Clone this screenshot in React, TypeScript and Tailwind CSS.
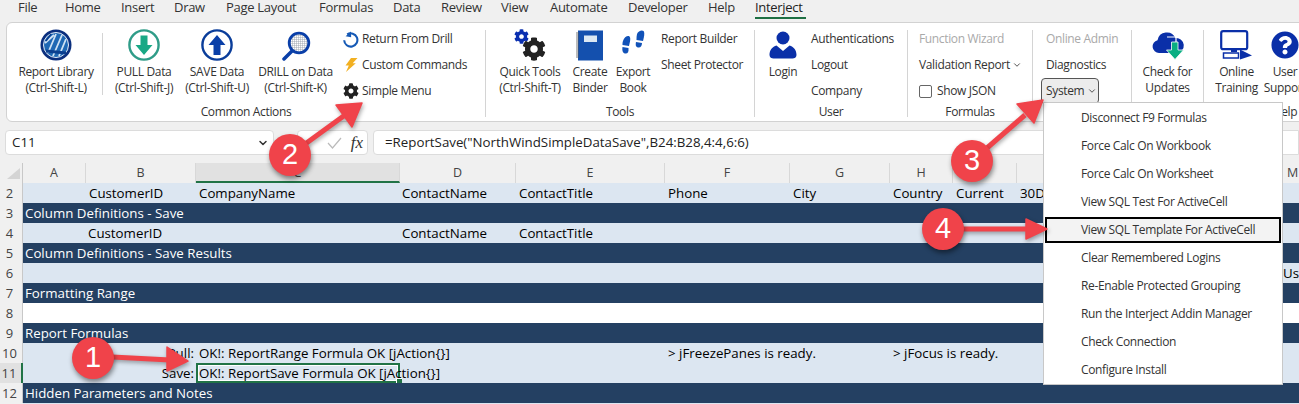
import type { ReactNode } from 'react'
import { FaCog, FaQuestionCircle } from 'react-icons/fa'
import { ChevronDown } from 'lucide-react'

const tabs = [
  { label: 'File', cls: 'w-[47px]' },
  { label: 'Home', cls: 'w-[56px]' },
  { label: 'Insert', cls: 'w-[53px]' },
  { label: 'Draw', cls: 'w-[52px]' },
  { label: 'Page Layout', cls: 'w-[93px]' },
  { label: 'Formulas', cls: 'w-[74px]' },
  { label: 'Data', cls: 'w-[48px]' },
  { label: 'Review', cls: 'w-[60px]' },
  { label: 'View', cls: 'w-[49px]' },
  { label: 'Automate', cls: 'w-[78px]' },
  { label: 'Developer', cls: 'w-[80px]' },
  { label: 'Help', cls: 'w-[47px]' },
]

const columns = [
  { label: 'A', cls: 'w-[63px]' },
  { label: 'B', cls: 'w-[110px]' },
  { label: 'C', cls: 'w-[204px] bg-[#e1e1e1] border-b-2 border-b-[#217346]' },
  { label: 'D', cls: 'w-[116px]' },
  { label: 'E', cls: 'w-[149px]' },
  { label: 'F', cls: 'w-[125px]' },
  { label: 'G', cls: 'w-[100px]' },
  { label: 'H', cls: 'w-[63px]' },
  { label: 'I', cls: 'w-[64px]' },
  { label: 'J', cls: 'w-[89px]' },
  { label: 'K', cls: 'w-[89px]' },
  { label: 'L', cls: 'w-[88px]' },
  { label: 'M', cls: 'w-[20px]' },
]

const menuItems = [
  'Disconnect F9 Formulas',
  'Force Calc On Workbook',
  'Force Calc On Worksheet',
  'View SQL Test For ActiveCell',
  'View SQL Template For ActiveCell',
  'Clear Remembered Logins',
  'Re-Enable Protected Grouping',
  'Run the Interject Addin Manager',
  'Check Connection',
  'Configure Install',
]

function Separator() {
  return <div className="my-[4px] w-px shrink-0 bg-[#d4d4d4]" />
}

function Group({ label, cls, children }: { label: string; cls: string; children: ReactNode }) {
  return (
    <div className={`flex shrink-0 flex-col ${cls}`}>
      <div className="flex h-[78px]">{children}</div>
      <div className="h-[16px] text-center text-[12px] leading-[16px] tracking-[-0.35px] text-[#333]">{label}</div>
    </div>
  )
}

function BigButton({ cls, icon, lines }: { cls: string; icon: ReactNode; lines: string[] }) {
  return (
    <div className={`flex shrink-0 flex-col items-center ${cls}`}>
      <div className="flex h-[38px] items-center justify-center">{icon}</div>
      {lines.map((l) => (
        <div key={l} className="whitespace-nowrap text-[12px] leading-[16px] tracking-[-0.35px] text-[#333]">
          {l}
        </div>
      ))}
    </div>
  )
}

function SmallRow({ icon, cls, children }: { icon?: ReactNode; cls?: string; children: ReactNode }) {
  return (
    <div className={`flex h-[26px] items-center whitespace-nowrap text-[12px] tracking-[-0.35px] text-[#333] ${cls ?? ''}`}>
      {icon && <span className="flex w-[20px] justify-center pr-[3px]">{icon}</span>}
      {children}
    </div>
  )
}

function GlobeIcon() {
  return (
    <svg width="32" height="32" viewBox="0 0 32 32">
      <circle cx="16" cy="16" r="15.5" fill="#0b2f7e" />
      <circle cx="16" cy="16" r="12.5" fill="#1f68b4" stroke="#e6eef8" strokeWidth="1" />
      <path d="M8 24 16 5M13 27 22 6M19 27 26 10M5 14 14 6" stroke="#cfe2f4" strokeWidth="1.800" />
      <path d="M6 22 26 24" stroke="#0b3f8f" strokeWidth="3" />
      <path d="M6 12 11 5" stroke="#0b3f8f" strokeWidth="1.500" />
    </svg>
  )
}

function PullIcon() {
  return (
    <svg width="32" height="32" viewBox="0 0 32 32">
      <circle cx="16" cy="16" r="14.6" fill="#fff" stroke="#2f9c88" strokeWidth="2.400" />
      <path d="M12.500 6.500h7v9.500h5L16 26 7.500 16h5z" fill="#19a885" />
    </svg>
  )
}

function SaveIcon() {
  return (
    <svg width="32" height="32" viewBox="0 0 32 32">
      <circle cx="16" cy="16" r="14.6" fill="#fff" stroke="#0a3d9a" strokeWidth="2.400" />
      <path d="M12.500 26v-10h-5L16 6l8.500 10h-5v10z" fill="#0a3fa8" />
    </svg>
  )
}

function DrillIcon() {
  return (
    <svg width="32" height="32" viewBox="0 0 32 32">
      <defs>
        <pattern id="mesh" width="2" height="2" patternUnits="userSpaceOnUse">
          <rect width="2" height="2" fill="#fff" />
          <path d="M0 0h2M0 0v2" stroke="#8f98a3" strokeWidth="0.800" />
        </pattern>
      </defs>
      <path d="M13 21 4 30" stroke="#0a3fa8" strokeWidth="3.500" strokeLinecap="round" />
      <circle cx="19" cy="14" r="9.800" fill="url(#mesh)" stroke="#0a3fa8" strokeWidth="2.800" />
    </svg>
  )
}

function ReturnIcon() {
  return (
    <svg width="17" height="17" viewBox="0 0 18 18">
      <path d="M5.500 3.600A7 7 0 1 1 2.300 9.800" fill="none" stroke="#1559b5" strokeWidth="2.200" />
      <path d="M9.500 0.600 9.700 6.600 3.800 5.600z" fill="#1559b5" />
    </svg>
  )
}

function BoltIcon() {
  return (
    <svg width="16" height="16" viewBox="0 0 16 16">
      <path d="M8 1h6.500L9.700 6.200h3.100L3 15l2.800-6.600H2.500z" fill="#f2b021" />
    </svg>
  )
}

function QuickToolsIcon() {
  return (
    <span className="relative block h-[32px] w-[32px]">
      <FaCog className="absolute left-0 top-0 text-[15px] text-[#0a2fb0]" />
      <FaCog className="absolute bottom-0 right-0 text-[24px] text-[#222]" />
    </span>
  )
}

function BinderIcon() {
  return (
    <svg width="28" height="31" viewBox="0 0 28 31">
      <rect x="2" y="0.500" width="25" height="30" fill="#1450ae" />
      <rect x="8" y="5.500" width="13" height="6.500" fill="#dce8f3" />
      <path
        d="M0 3h3M0 5h3M0 7h3M0 9h3M0 11h3M0 13h3M0 15h3M0 17h3M0 19h3M0 21h3M0 23h3M0 25h3M0 27h3"
        stroke="#555"
        strokeWidth="0.800"
      />
    </svg>
  )
}

function FeetIcon() {
  return (
    <svg width="26" height="30" viewBox="0 0 26 30">
      <g fill="#1152b8">
        <path d="M3 11c1-4 5-6 6.500-4.500S10 12 9 16l-6.500-1c0-1.500 0-2.500.5-4z" />
        <path d="M2.500 17 8.500 18c.5 4-1 6-3.500 5.500S2 20 2.500 17z" />
        <path d="M17 4c1-3 5-4.500 6.500-3S24 7 23 11l-6.500-1C16.500 8 16.500 6 17 4z" />
        <path d="M16 12l6 1c0 3-1.500 5-4 4.500S15.500 15 16 12z" />
      </g>
    </svg>
  )
}

function UserIcon() {
  return (
    <svg width="28" height="28" viewBox="0 0 28 28">
      <circle cx="14" cy="7" r="6.500" fill="#0a2fa8" />
      <path d="M7.500 14.500 14 20l6.500-5.500C24.500 15.500 27.500 19 27.500 24c0 2.500-2 3.500-4 3.500h-19c-2 0-4-1-4-3.500 0-5 3-8.500 7-9.500z" fill="#0a2fa8" />
    </svg>
  )
}

function CloudIcon() {
  return (
    <svg width="34" height="30" viewBox="0 0 34 30">
      <path d="M8 23a6.500 6.500 0 0 1-1.500-12.800A9.500 9.500 0 0 1 24.500 8 7.500 7.500 0 0 1 26 23z" fill="#0a2fa8" />
      <path d="M16 7h9v7" fill="none" stroke="#fff" strokeWidth="1.200" />
      <path d="M20.500 12h6.500v8h5.500L24 29.500 15.500 20h5z" fill="#09ae82" stroke="#fff" strokeWidth="0.800" />
    </svg>
  )
}

function TrainingIcon() {
  return (
    <svg width="33" height="30" viewBox="0 0 33 30">
      <rect x="1.200" y="1.200" width="26" height="18" rx="2" fill="#fff" stroke="#0a2fa8" strokeWidth="2.200" />
      <path d="M11 20h6v2h-6z" fill="#0a2fa8" />
      <rect x="3.500" y="23" width="15" height="5" fill="#fff" stroke="#0a2fa8" strokeWidth="1.500" />
      <path d="M20 19.500 32 25.500 20 29.500z" fill="#0a2fa8" />
    </svg>
  )
}

function Checkbox() {
  return <span className="mr-[5px] block h-[13px] w-[13px] rounded-[2px] border border-[#666] bg-white" />
}

type RowProps = {
  n: number
  tone: 'light' | 'dark' | 'white'
  cells?: { col: string; text: string }[]
  active?: boolean
  children?: ReactNode
}

function Row({ n, tone, cells = [], active, children }: RowProps) {
  const toneCls =
    tone === 'dark' ? 'bg-[#244062] text-white' : tone === 'white' ? 'bg-white text-black' : 'bg-[#dce6f1] text-black'
  return (
    <div className="flex h-[20px]">
      <div
        className={`w-[23px] shrink-0 pr-[3px] text-center text-[13px] leading-[20px] text-[#444] ${
          active ? 'border-r-2 border-r-[#217346] bg-[#e1e1e1]' : 'border-r border-r-[#c8c8c8] bg-[#f0f0f0]'
        }`}
      >
        {n}
      </div>
      <div className={`relative flex-1 overflow-hidden text-[13.3px] leading-[20px] ${toneCls}`}>
        {children}
        {cells.map((c) => (
          <span key={c.col + c.text} className={`absolute top-0 whitespace-nowrap ${c.col}`}>
            {c.text}
          </span>
        ))}
      </div>
    </div>
  )
}

function Bubble({ cls, n }: { cls: string; n: number }) {
  return (
    <div
      className={`absolute flex h-[42px] w-[42px] items-center justify-center rounded-full bg-[#f0434a] font-['Liberation_Sans',sans-serif] text-[29px] text-white shadow-[1px_3px_5px_rgba(0,0,0,0.45)] ${cls}`}
    >
      {n}
    </div>
  )
}

export default function App() {
  return (
    <div className="relative h-[404px] w-[1299px] overflow-hidden bg-[#f0f0f0] font-['Open_Sans',sans-serif]">
      {/* tabs */}
      <div className="flex h-[22px] pl-[18px] text-[13px] leading-[15px] tracking-[-0.3px] text-[#333]">
        {tabs.map((t) => (
          <div key={t.label} className={`shrink-0 whitespace-nowrap ${t.cls}`}>
            {t.label}
          </div>
        ))}
        <div className="h-[19px] w-[51px] shrink-0 border-b-2 border-b-[#1e6f43] text-[#222]">Interject</div>
      </div>

      {/* ribbon */}
      <div className="ml-[6px] flex h-[100px] w-[1400px] rounded-l-[6px] border border-[#d2d2d2] bg-white pt-[3px]">
        <Group label="Common Actions" cls="w-[478px]">
          <BigButton cls="ml-[4px] w-[90px]" icon={<GlobeIcon />} lines={['Report Library', '(Ctrl-Shift-L)']} />
          <div className="mb-[9px] ml-px mt-[7px] w-px bg-[#d4d4d4]" />
          <BigButton cls="w-[82px]" icon={<PullIcon />} lines={['PULL Data', '(Ctrl-Shift-J)']} />
          <BigButton cls="w-[64px]" icon={<SaveIcon />} lines={['SAVE Data', '(Ctrl-Shift-U)']} />
          <BigButton cls="w-[93px]" icon={<DrillIcon />} lines={['DRILL on Data', '(Ctrl-Shift-K)']} />
          <div className="flex flex-col">
            <SmallRow icon={<ReturnIcon />}>Return From Drill</SmallRow>
            <SmallRow icon={<BoltIcon />}>Custom Commands</SmallRow>
            <SmallRow icon={<FaCog className="text-[16px] text-[#222]" />}>Simple Menu</SmallRow>
          </div>
        </Group>
        <Separator />
        <Group label="Tools" cls="w-[268px]">
          <BigButton cls="w-[88px]" icon={<QuickToolsIcon />} lines={['Quick Tools', '(Ctrl-Shift-T)']} />
          <BigButton cls="w-[32px]" icon={<BinderIcon />} lines={['Create', 'Binder']} />
          <BigButton cls="w-[54px]" icon={<FeetIcon />} lines={['Export', 'Book']} />
          <div className="ml-px flex flex-col">
            <SmallRow>Report Builder</SmallRow>
            <SmallRow>Sheet Protector</SmallRow>
          </div>
        </Group>
        <Separator />
        <Group label="User" cls="w-[152px]">
          <BigButton cls="w-[56px]" icon={<UserIcon />} lines={['Login']} />
          <div className="flex flex-col">
            <SmallRow>Authentications</SmallRow>
            <SmallRow>Logout</SmallRow>
            <SmallRow>Company</SmallRow>
          </div>
        </Group>
        <Separator />
        <Group label="Formulas" cls="w-[124px]">
          <div className="flex flex-col pl-[11px]">
            <SmallRow cls="text-[#a9a9a9]">Function Wizard</SmallRow>
            <SmallRow>
              Validation Report
              <ChevronDown className="ml-[2px] h-[10px] w-[10px]" />
            </SmallRow>
            <SmallRow>
              <Checkbox />
              Show JSON
            </SmallRow>
          </div>
        </Group>
        <Separator />
        <Group label="" cls="w-[98px]">
          <div className="flex flex-col pl-[8px]">
            <SmallRow cls="pl-[5px] text-[#a9a9a9]">Online Admin</SmallRow>
            <SmallRow cls="pl-[5px]">Diagnostics</SmallRow>
            <SmallRow cls="w-[58px] rounded-[4px] border border-[#555] bg-[#ececec] pl-[4px]">
              System
              <ChevronDown className="ml-[3px] h-[10px] w-[10px]" />
            </SmallRow>
          </div>
        </Group>
        <Separator />
        <Group label="" cls="w-[71px]">
          <BigButton cls="w-[71px]" icon={<CloudIcon />} lines={['Check for', 'Updates']} />
        </Group>
        <Separator />
        <Group label="Help" cls="w-[162px]">
          <BigButton cls="w-[65px]" icon={<TrainingIcon />} lines={['Online', 'Training']} />
          <BigButton cls="w-[32px]" icon={<FaQuestionCircle className="text-[28px] text-[#0a2fa8]" />} lines={['User', 'Support']} />
        </Group>
      </div>

      {/* formula bar */}
      <div className="flex h-[41px] items-start pl-[5px] pt-[8px]">
        <div className="flex h-[25px] w-[269px] items-center justify-between rounded-[4px] border border-[#dcdcdc] bg-white pl-[6px] pr-[4px] text-[13.3px] text-[#222]">
          C11
          <ChevronDown className="h-[12px] w-[12px] text-[#333]" strokeWidth={3} />
        </div>
        <div className="ml-[23px] flex h-[25px] w-[71px] items-center justify-end gap-[9px] rounded-[4px] border border-[#dcdcdc] bg-white pr-[4px]">
          <svg width="15" height="12" viewBox="0 0 15 12">
            <path d="M1 6 5.500 11 14 1" fill="none" stroke="#bbb" strokeWidth="1.200" />
          </svg>
          <span className="font-['Liberation_Serif',serif] text-[17px] italic text-[#333]">fx</span>
        </div>
        <div className="ml-[5px] flex h-[25px] flex-1 items-center rounded-l-[4px] border border-[#dcdcdc] bg-white pl-[11px] text-[13.3px] text-[#222]">
          =ReportSave("NorthWindSimpleDataSave",B24:B28,4:4,6:6)
        </div>
      </div>

      {/* column headers */}
      <div className="flex h-[20px]">
        <div className="flex w-[23px] shrink-0 items-end justify-end border-r border-r-[#c8c8c8] pb-[4px] pr-[2px]">
          <svg width="13" height="11" viewBox="0 0 13 11">
            <path d="M13 0v11H0z" fill="#d4d4d4" />
          </svg>
        </div>
        {columns.map((c) => (
          <div
            key={c.label}
            className={`shrink-0 border-r border-r-[#d8d8d8] text-center text-[12.5px] leading-[19px] text-[#444] ${c.cls}`}
          >
            {c.label}
          </div>
        ))}
      </div>

      {/* sheet */}
      <Row
        n={2}
        tone="light"
        cells={[
          { col: 'left-[66px]', text: 'CustomerID' },
          { col: 'left-[176px]', text: 'CompanyName' },
          { col: 'left-[379px]', text: 'ContactName' },
          { col: 'left-[496px]', text: 'ContactTitle' },
          { col: 'left-[645px]', text: 'Phone' },
          { col: 'left-[770px]', text: 'City' },
          { col: 'left-[870px]', text: 'Country' },
          { col: 'left-[933px]', text: 'Current' },
          { col: 'left-[997px]', text: '30Days' },
        ]}
      />
      <Row n={3} tone="dark" cells={[{ col: 'left-[2px]', text: 'Column Definitions - Save' }]} />
      <Row
        n={4}
        tone="light"
        cells={[
          { col: 'left-[65px]', text: 'CustomerID' },
          { col: 'left-[379px]', text: 'ContactName' },
          { col: 'left-[496px]', text: 'ContactTitle' },
        ]}
      />
      <Row n={5} tone="dark" cells={[{ col: 'left-[2px]', text: 'Column Definitions - Save Results' }]} />
      <Row n={6} tone="light" cells={[{ col: 'left-[1260px]', text: 'User' }]} />
      <Row n={7} tone="dark" cells={[{ col: 'left-[2px]', text: 'Formatting Range' }]} />
      <Row n={8} tone="white" />
      <Row n={9} tone="dark" cells={[{ col: 'left-[2px]', text: 'Report Formulas' }]} />
      <Row
        n={10}
        tone="light"
        cells={[
          { col: 'right-[1105px]', text: 'Pull:' },
          { col: 'left-[176px]', text: 'OK!: ReportRange Formula OK [jAction{}]' },
          { col: 'left-[645px]', text: '> jFreezePanes is ready.' },
          { col: 'left-[870px]', text: '> jFocus is ready.' },
        ]}
      />
      <Row
        n={11}
        tone="light"
        active
        cells={[
          { col: 'right-[1105px]', text: 'Save:' },
          { col: 'left-[176px]', text: 'OK!: ReportSave Formula OK [jAction{}]' },
        ]}
      >
        {/* active cell outline */}
        <div className="absolute left-[173px] top-0 h-[20px] w-[204px] border-2 border-[#217346] shadow-[inset_0_0_0_1px_#fff]" />
        <div className="absolute left-[373px] top-[15px] h-[5px] w-[6px] border-l border-t border-white bg-[#217346]" />
      </Row>
      <Row n={12} tone="dark" cells={[{ col: 'left-[2px]', text: 'Hidden Parameters and Notes' }]} />
      <div className="ml-[23px] h-[2px] bg-[#dce6f1]" />

      {/* system dropdown */}
      <div className="absolute left-[1043px] top-[102px] w-[240px] border border-[#c8c8c8] bg-white pt-px">
        {menuItems.map((item, i) => (
          <div
            key={item}
            className={`flex items-center text-[12px] tracking-[-0.35px] text-[#333] ${
              i === 4 ? 'mx-px my-px h-[26px] border-2 border-black bg-[#f3f3f3] pl-[34px]' : 'h-[28px] pl-[37px]'
            }`}
          >
            {item}
          </div>
        ))}
      </div>

      {/* callouts */}
      <svg className="absolute inset-0 h-full w-full drop-shadow-[1px_2px_2px_rgba(0,0,0,0.35)]" viewBox="0 0 1299 404">
        <g fill="#f0434a" stroke="#f0434a" strokeLinejoin="round">
          <path d="M93 356 170 360" strokeWidth="5" />
          <path d="M167 347 188 361 167 371z" strokeWidth="1.500" />
          <path d="M290 155 345 115" strokeWidth="5" />
          <path d="M362 103 352 127 336 105z" strokeWidth="1.500" />
          <path d="M972 161 1025 115" strokeWidth="5" />
          <path d="M1043 100 1034 123 1017 104z" strokeWidth="1.500" />
          <path d="M943 229 1030 229" strokeWidth="5" />
          <path d="M1047 229 1026 219 1026 239z" strokeWidth="1.500" />
        </g>
      </svg>
      <Bubble n={1} cls="left-[72px] top-[337px]" />
      <Bubble n={2} cls="left-[269px] top-[134px]" />
      <Bubble n={3} cls="left-[951px] top-[140px]" />
      <Bubble n={4} cls="left-[922px] top-[208px]" />
    </div>
  )
}
